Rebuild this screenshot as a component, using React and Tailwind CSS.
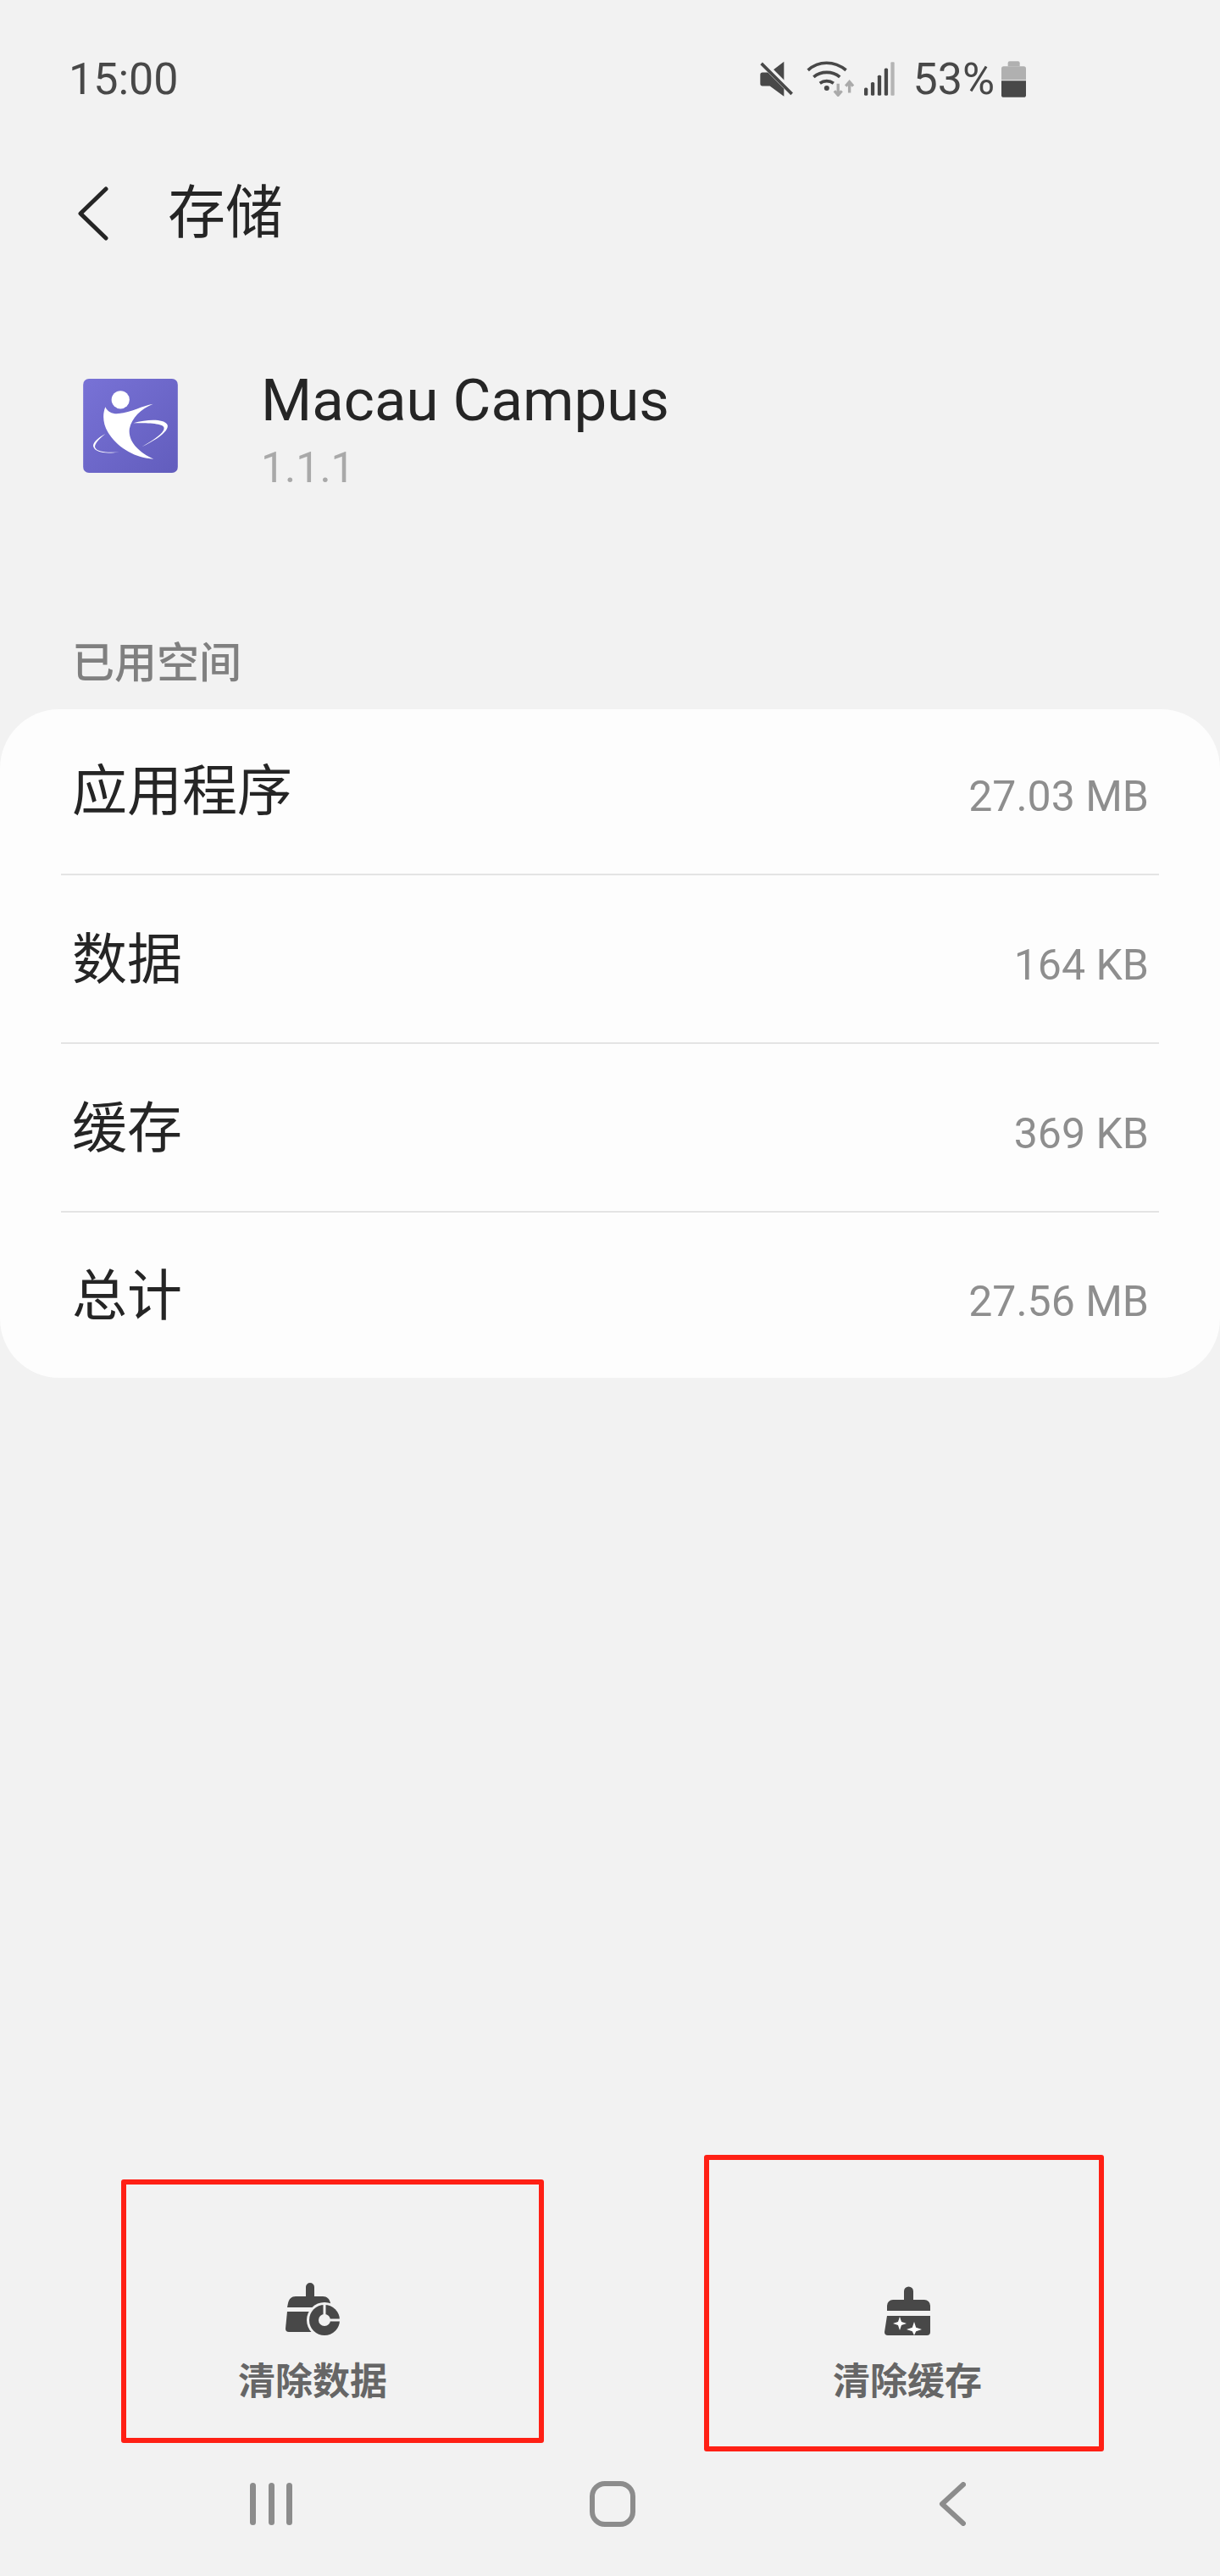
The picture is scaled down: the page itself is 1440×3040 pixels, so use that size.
import React from 'react'

const rows = [
  { label: '应用程序', value: '27.03 MB' },
  { label: '数据', value: '164 KB' },
  { label: '缓存', value: '369 KB' },
  { label: '总计', value: '27.56 MB' },
]

function MuteIcon() {
  return (
    <svg width="39" height="42" viewBox="115 90 117 125" className="shrink-0">
      <path d="M124 130h26l50-38v123l-50-37h-26a8 8 0 0 1-8-8v-32a8 8 0 0 1 8-8z" fill="#484848" />
      <path d="M112 84l126 126" stroke="#f2f2f2" strokeWidth="22" />
      <path d="M120 98l108 108" stroke="#484848" strokeWidth="11" />
    </svg>
  )
}

function WifiIcon() {
  return (
    <svg width="57" height="42" viewBox="280 90 170 125" fill="none" className="shrink-0">
      <path d="M285 122c38-34 92-34 134 0" stroke="#484848" strokeWidth="11" />
      <path d="M305 146c26-22 66-22 92 0" stroke="#484848" strokeWidth="11" />
      <path d="M327 168c14-10 34-10 48 0" stroke="#484848" strokeWidth="11" />
      <circle cx="351" cy="185" r="9" fill="#484848" />
      <path d="M391 170v38M378 195l13 15 13-15" stroke="#aaaaaa" strokeWidth="10" />
      <path d="M431 202v-38M418 178l13-15 13 15" stroke="#aaaaaa" strokeWidth="10" />
    </svg>
  )
}

function SignalIcon() {
  return (
    <svg width="36" height="40" viewBox="483 98 109 120" className="shrink-0">
      <rect x="483" y="190" width="13" height="28" rx="5" fill="#484848" />
      <rect x="507" y="170" width="13" height="48" rx="5" fill="#484848" />
      <rect x="531" y="145" width="13" height="73" rx="5" fill="#484848" />
      <rect x="555" y="120" width="13" height="98" rx="5" fill="#484848" />
      <rect x="578" y="98" width="13" height="120" rx="3" fill="#b4b4b4" />
    </svg>
  )
}

function BatteryIcon() {
  return (
    <svg width="29" height="43" viewBox="965 90 87 128" className="shrink-0">
      <path d="M988 96a6 6 0 0 1 6-6h30a6 6 0 0 1 6 6v12h-42z" fill="#b0b0b0" />
      <path d="M965 116a8 8 0 0 1 8-8h71a8 8 0 0 1 8 8v40h-87z" fill="#b0b0b0" />
      <path d="M965 159h87v51a8 8 0 0 1-8 8h-71a8 8 0 0 1-8-8z" fill="#484848" />
    </svg>
  )
}

function AppLogo() {
  return (
    <svg width="112" height="111" viewBox="53 80 337 335" className="shrink-0 rounded-[7px]">
      <defs>
        <linearGradient id="logoBg" x1="0" y1="0" x2="1" y2="1">
          <stop offset="0" stopColor="#7872d6" />
          <stop offset="1" stopColor="#625dbd" />
        </linearGradient>
      </defs>
      <rect x="53" y="80" width="337" height="335" fill="url(#logoBg)" />
      <circle cx="186" cy="155" r="32" fill="#fff" />
      <path d="M132 180c8 18 26 26 48 24 44-4 84-28 122-34-44 18-76 50-84 88-6 46 34 84 86 108-64-4-122-36-158-88-22-32-26-68-14-98z" fill="#fff" />
      <path d="M232 238c48-14 106-16 120 4 12 20-34 54-90 80 44-24 86-54 78-70-10-14-60-14-108-14z" fill="#fff" />
      <path d="M132 276c-30 16-48 34-42 48 8 20 50 24 92 16-36 4-78 2-86-14-6-12 14-32 36-50z" fill="#fff" />
    </svg>
  )
}

function BrushClockIcon() {
  return (
    <svg width="64" height="62" viewBox="0 0 64 62" className="shrink-0">
      <path d="M24 5a5 5 0 0 1 10 0v11h10c5 0 8 3 9 8l1 5H2l1-5c1-5 4-8 9-8h12z" fill="#484848" />
      <path d="M2 34h34v24H4a4 4 0 0 1-4-4z" fill="#484848" />
      <circle cx="46" cy="44" r="21" fill="#f2f2f2" />
      <circle cx="46" cy="44" r="18" fill="#484848" />
      <circle cx="46" cy="44" r="7" fill="#f2f2f2" />
      <path d="M46 44V24M46 44h20" stroke="#f2f2f2" strokeWidth="3" />
    </svg>
  )
}

function BrushSparkleIcon() {
  return (
    <svg width="54" height="58" viewBox="0 0 54 58" className="shrink-0">
      <path d="M23 6a5.500 5.500 0 0 1 11 0v10h13a7 7 0 0 1 7 7v6H3v-6a7 7 0 0 1 7-7h13z" fill="#484848" />
      <path d="M3 35h51v19a4 4 0 0 1-4 4H4a4 4 0 0 1-4-4z" fill="#484848" />
      <path d="M18 36l2 6 6 2-6 2-2 6-2-6-6-2 6-2z" fill="#fff" />
      <path d="M35 42l2.200 6.800 6.800 2.200-6.800 2.200-2.200 4.800-2.200-4.800-6.800-2.200 6.800-2.200z" fill="#fff" />
    </svg>
  )
}

export default function App() {
  return (
    <div className="relative w-[1440px] h-[3040px] overflow-hidden flex flex-col bg-[#f2f2f2] font-['Roboto','Noto_Sans_CJK_SC',sans-serif] text-[#252525]">
      {/* status bar */}
      <div className="mt-[63px] h-[60px] pl-[81px] pr-[229px] flex items-center justify-between text-[#484848]">
        <span className="pt-[2px] text-[52px] leading-none">15:00</span>
        <div className="flex items-center">
          <MuteIcon />
          <div className="ml-[16px]"><WifiIcon /></div>
          <div className="ml-[11px]"><SignalIcon /></div>
          <span className="ml-[21px] pt-[2px] text-[52px] leading-none">53%</span>
          <div className="ml-[8px]"><BatteryIcon /></div>
        </div>
      </div>

      {/* header */}
      <div className="mt-[79px] h-[100px] pl-[91px] flex items-center">
        <svg width="37" height="64" viewBox="0 0 37 64" fill="none" className="shrink-0">
          <path d="M34 3L4 32l30 29" stroke="#252525" strokeWidth="5" strokeLinecap="round" strokeLinejoin="round" />
        </svg>
        <h1 className="ml-[70px] text-[68px] leading-none font-normal">存储</h1>
      </div>

      {/* app info */}
      <div className="mt-[145px] h-[112px] pl-[98px] flex items-start">
        <AppLogo />
        <div className="ml-[98px] flex flex-col">
          <span className="text-[69px] leading-[52px]">Macau Campus</span>
          <span className="mt-[28px] text-[50px] leading-[50px] text-[#a9a9a9]">1.1.1</span>
        </div>
      </div>

      <div className="mt-[194px] h-[60px] pl-[85px] flex items-center text-[50px] font-medium text-[#808080]">已用空间</div>

      {/* storage list */}
      <div className="mt-[24px] rounded-[70px] bg-[#fdfdfd]">
        {rows.map(row => (
          <div
            key={row.label}
            className="mx-[72px] h-[199px] pl-[13px] pr-[12px] flex items-center justify-between border-b-2 border-[#e4e4e4] first:h-[196px] first:pb-[4px] last:h-[195px] last:border-b-0"
          >
            <span className="pt-[4px] text-[65px] leading-none">{row.label}</span>
            <span className="pt-[15px] text-[50px] leading-none text-[#8e8e8e]">{row.value}</span>
          </div>
        ))}
      </div>

      {/* actions */}
      <div className="mt-auto flex">
        <button className="w-[738px] flex flex-col items-center">
          <div className="h-[62px] flex items-end"><BrushClockIcon /></div>
          <span className="mt-[25px] text-[44px] leading-[60px] font-semibold text-[#666666]">清除数据</span>
        </button>
        <button className="w-[666px] flex flex-col items-center">
          <div className="h-[62px] flex items-end"><BrushSparkleIcon /></div>
          <span className="mt-[25px] text-[44px] leading-[60px] font-semibold text-[#666666]">清除缓存</span>
        </button>
      </div>

      {/* nav bar */}
      <div className="mt-[86px] mb-[57px] h-[56px] pl-[295px] flex items-center">
        <div className="w-[50px] flex justify-between">
          <div className="w-[7px] h-[50px] rounded-full bg-[#8c8c8c]" />
          <div className="w-[7px] h-[50px] rounded-full bg-[#8c8c8c]" />
          <div className="w-[7px] h-[50px] rounded-full bg-[#8c8c8c]" />
        </div>
        <div className="ml-[351px] w-[54px] h-[54px] rounded-[18px] border-[6px] border-[#8c8c8c]" />
        <svg width="32" height="52" viewBox="0 0 32 52" fill="none" className="ml-[358px] shrink-0">
          <path d="M29 3L4 26l25 23" stroke="#8c8c8c" strokeWidth="6" strokeLinecap="round" strokeLinejoin="round" />
        </svg>
      </div>

      {/* red annotation boxes on top of the screenshot */}
      <div className="absolute left-[143px] top-[2572px] w-[499px] h-[311px] border-[6px] border-[#ff2015] rounded-[3px]" />
      <div className="absolute left-[831px] top-[2543px] w-[472px] h-[350px] border-[6px] border-[#ff2015] rounded-[3px]" />
    </div>
  )
}
